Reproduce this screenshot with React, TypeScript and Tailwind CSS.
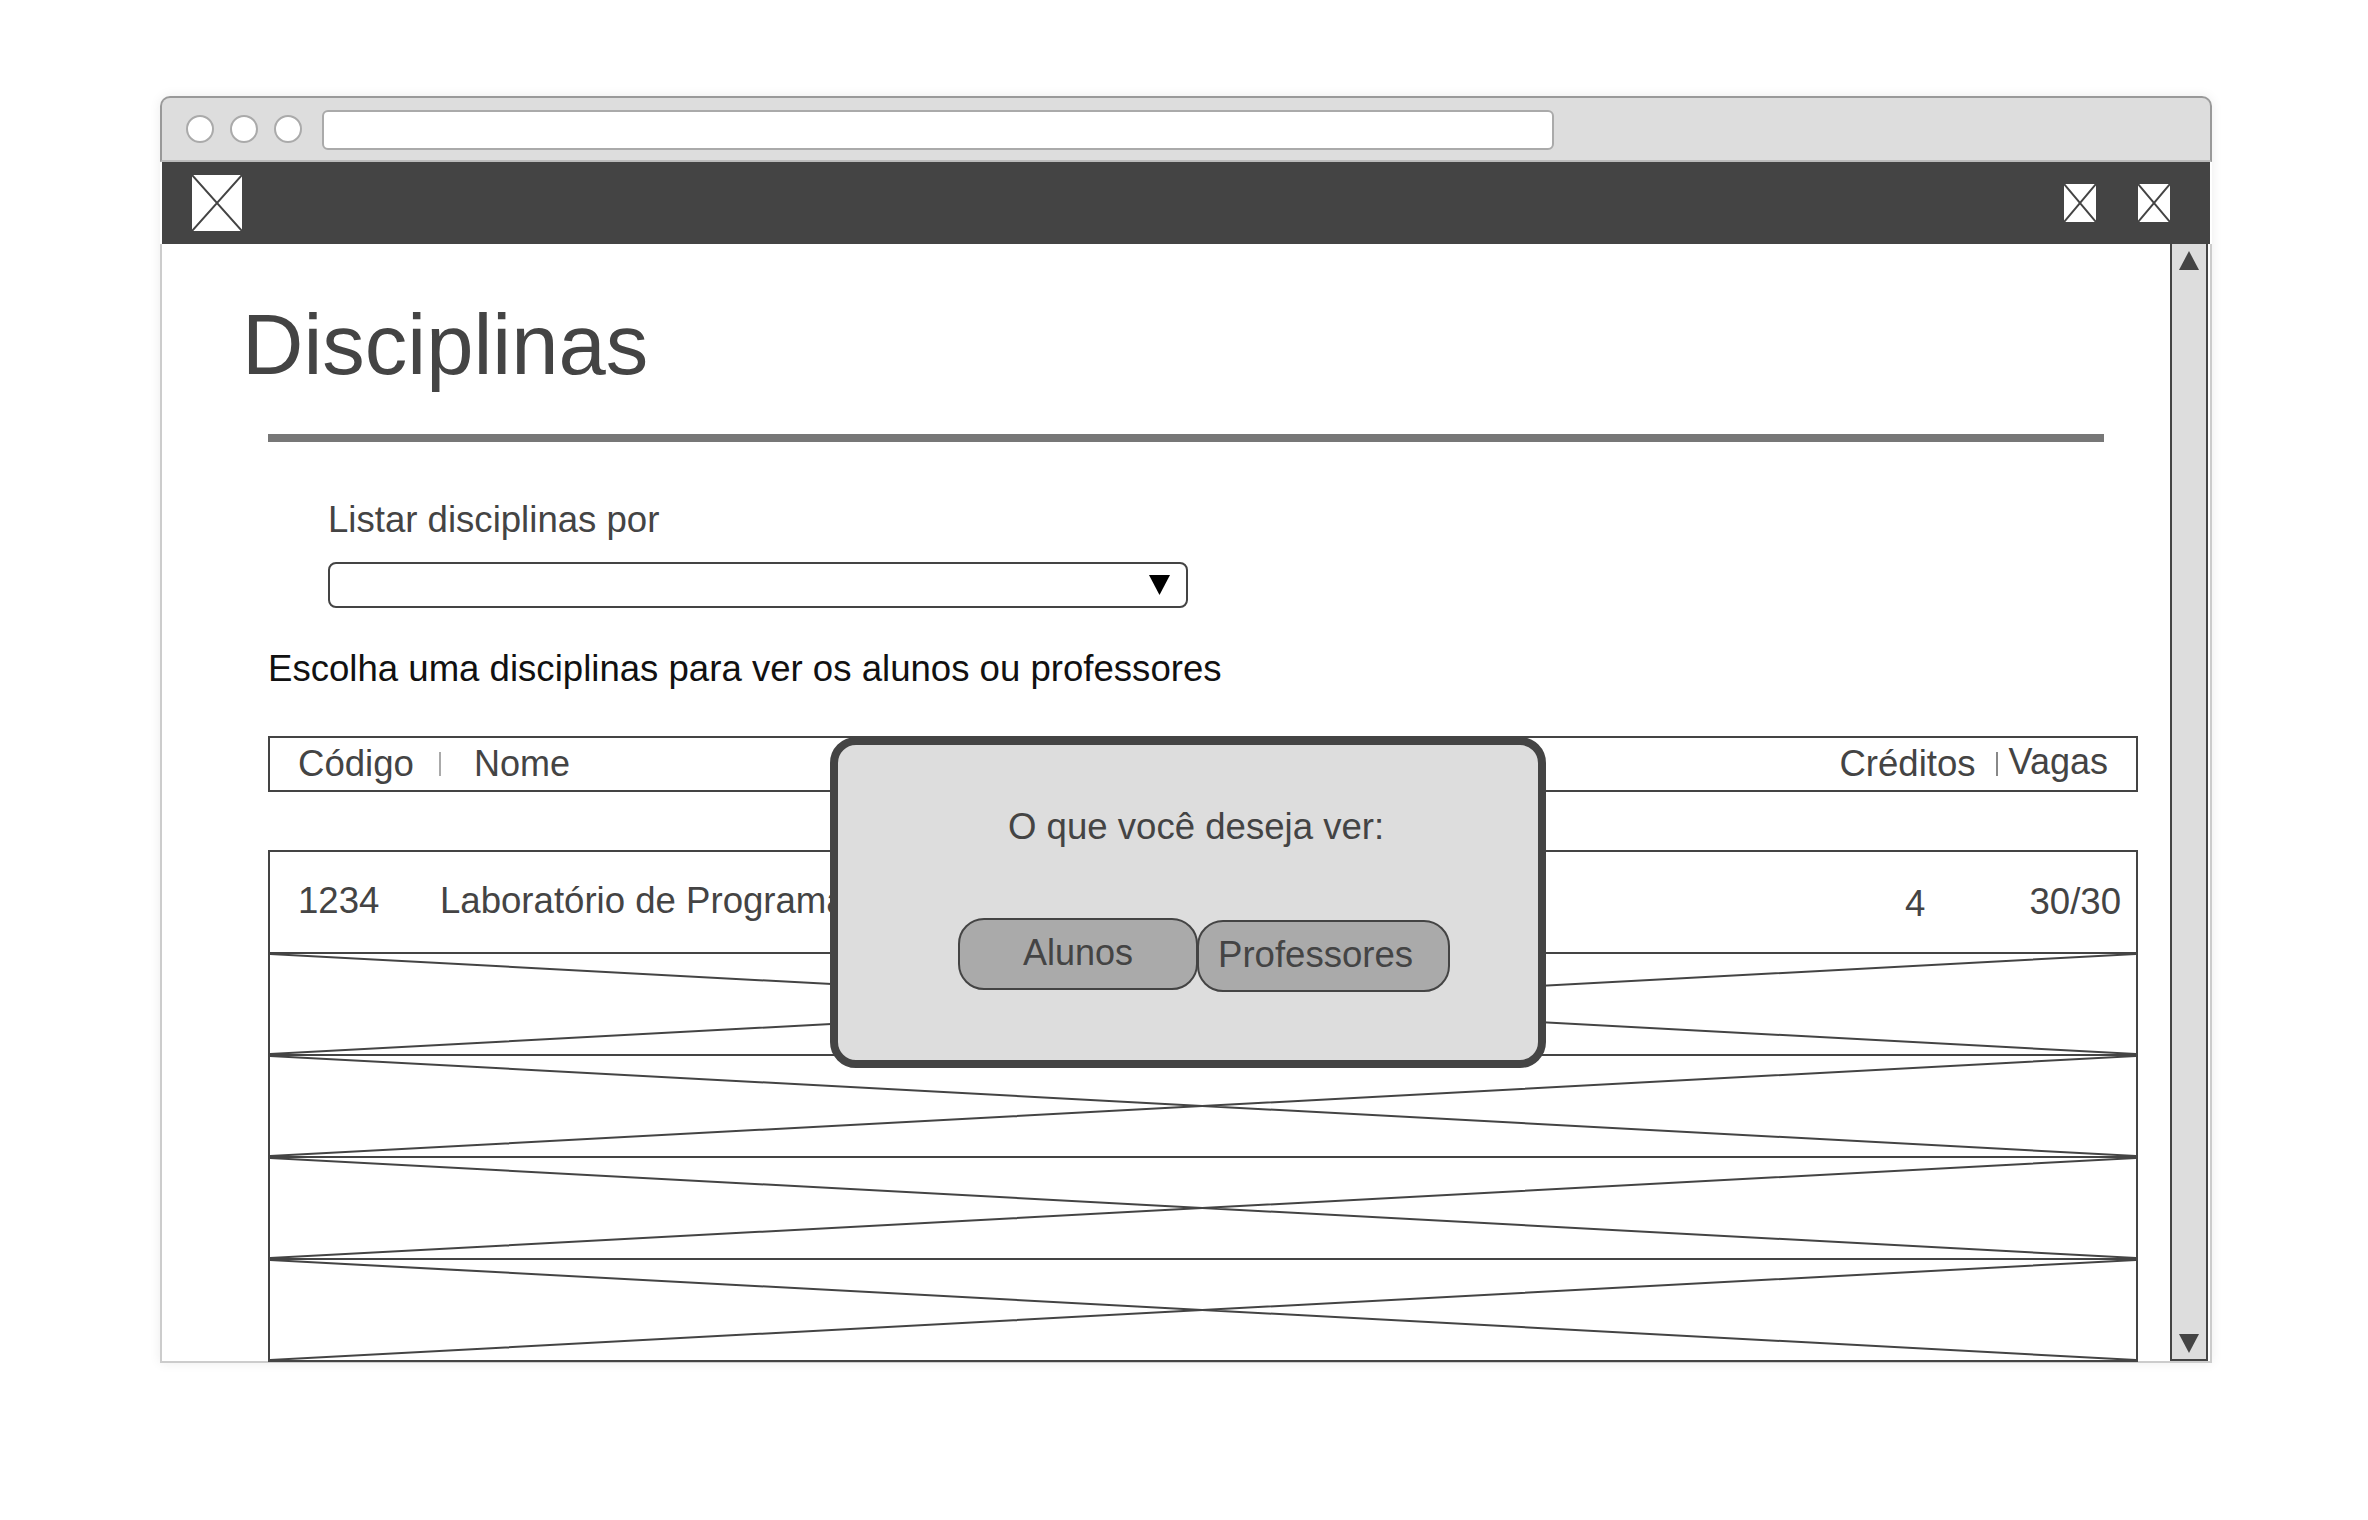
function CrossBox({ className }: { className: string }) {
  return (
    <svg className={className} viewBox="0 0 100 100" preserveAspectRatio="none">
      <rect width="100" height="100" fill="#fff" />
      <path d="M0 0L100 100M100 0L0 100" stroke="#444" strokeWidth="2" vectorEffect="non-scaling-stroke" fill="none" />
    </svg>
  );
}

function XRow() {
  return (
    <svg className="block h-[102px] w-full border-t-2 border-[#444]" viewBox="0 0 100 100" preserveAspectRatio="none">
      <path d="M0 0L100 100M100 0L0 100" stroke="#444" strokeWidth="2" vectorEffect="non-scaling-stroke" fill="none" />
    </svg>
  );
}

function Dot() {
  return <div className="h-[28px] w-[28px] rounded-full border-2 border-[#aaa] bg-white" />;
}

export default function App() {
  return (
    <div className="min-h-[1520px] bg-white pl-[160px] pt-[96px] font-['Liberation_Sans',Arial,sans-serif] text-[#444]">
      <div className="relative h-[1267px] w-[2052px] rounded-t-[10px] shadow-[0_0_12px_rgba(0,0,0,0.08)]">
        <div className="flex h-[66px] items-center rounded-t-[10px] border-x-2 border-t-2 border-b-2 border-[#999] border-b-[#bbb] bg-[#ddd] pl-[24px]">
          <div className="flex gap-[16px]">
            <Dot />
            <Dot />
            <Dot />
          </div>
          <div className="ml-[20px] mt-[2px] h-[40px] w-[1232px] rounded-[6px] border-2 border-[#aaa] bg-white" />
        </div>
        <div className="mx-[2px] flex h-[82px] items-center bg-[#444] pl-[30px] pr-[40px]">
          <CrossBox className="h-[56px] w-[50px]" />
          <div className="ml-auto flex gap-[42px]">
            <CrossBox className="h-[38px] w-[32px]" />
            <CrossBox className="h-[38px] w-[32px]" />
          </div>
        </div>
        <div className="flex h-[1119px] border-x-2 border-b-2 border-[#ccc] bg-white">
          <div className="w-[2008px] pl-[106px] pr-[32px]">
            <h1 className="ml-[-26px] mt-[58px] text-[85px] leading-[85px] font-normal">Disciplinas</h1>
            <div className="mt-[47px] h-[8px] w-[1836px] bg-[#777]" />
            <p className="ml-[60px] mt-[57px] text-[36.6px] leading-[41px]">Listar disciplinas por</p>
            <div className="relative ml-[60px] mt-[22px] flex h-[46px] w-[860px] items-center justify-end rounded-[8px] border-2 border-[#444] bg-white pr-[16px]">
              <svg className="h-[20px] w-[21px]" viewBox="0 0 21 20">
                <path d="M0 0H21L10.5 20Z" fill="#000" />
              </svg>
            </div>
            <p className="mt-[40px] text-[36.6px] leading-[41px] text-[#111]">Escolha uma disciplinas para ver os alunos ou professores</p>
            <div className="mt-[47px] flex h-[56px] w-[1870px] items-center border-2 border-[#444] pl-[28px] text-[36.6px]">
              <span>Código</span>
              <span className="ml-[25px] h-[24px] w-[2px] bg-[#aaa]" />
              <span className="ml-[33px] text-[36px]">Nome</span>
              <span className="ml-auto">Créditos</span>
              <span className="ml-[20px] h-[24px] w-[2px] bg-[#888]" />
              <span className="ml-[11px] mr-[28px] -translate-y-[2px] text-[36px]">Vagas</span>
            </div>
            <div className="mt-[58px] w-[1870px] border-2 border-[#444]">
              <div className="flex h-[100px] items-center pb-[2px] pl-[28px] text-[36.6px]">
                <span className="w-[142px]">1234</span>
                <span>Laboratório de Programação</span>
                <span className="ml-auto translate-y-[3px]">4</span>
                <span className="ml-[104px] mr-[15px] translate-y-[1px]">30/30</span>
              </div>
              <XRow />
              <XRow />
              <XRow />
              <XRow />
            </div>
          </div>
          <div className="flex w-[38px] flex-col items-center justify-between border-2 border-t-0 border-[#444] bg-[#ddd] pb-[6px] pt-[7px]">
            <svg className="h-[19px] w-[20px]" viewBox="0 0 20 19">
              <path d="M10 0L20 19H0Z" fill="#444" />
            </svg>
            <svg className="h-[19px] w-[20px]" viewBox="0 0 20 19">
              <path d="M0 0H20L10 19Z" fill="#444" />
            </svg>
          </div>
        </div>
        <div className="absolute left-[670px] top-[641px] h-[331px] w-[716px] rounded-[26px] border-[8px] border-[#444] bg-[#ddd]">
          <p className="ml-[170px] mt-[61px] text-[36.6px] leading-[41px]">O que você deseja ver:</p>
          <div className="ml-[120px] mt-[71px] flex items-start">
            <div className="flex h-[72px] w-[240px] items-center justify-center rounded-[26px] border-2 border-[#444] bg-[#aaa] pb-[2px] text-[36px]">Alunos</div>
            <div className="-ml-[1px] mt-[2px] flex h-[72px] w-[253px] items-center rounded-[26px] border-2 border-[#444] bg-[#aaa] pb-[2px] pl-[19px] text-[36.6px]">Professores</div>
          </div>
        </div>
      </div>
    </div>
  );
}
